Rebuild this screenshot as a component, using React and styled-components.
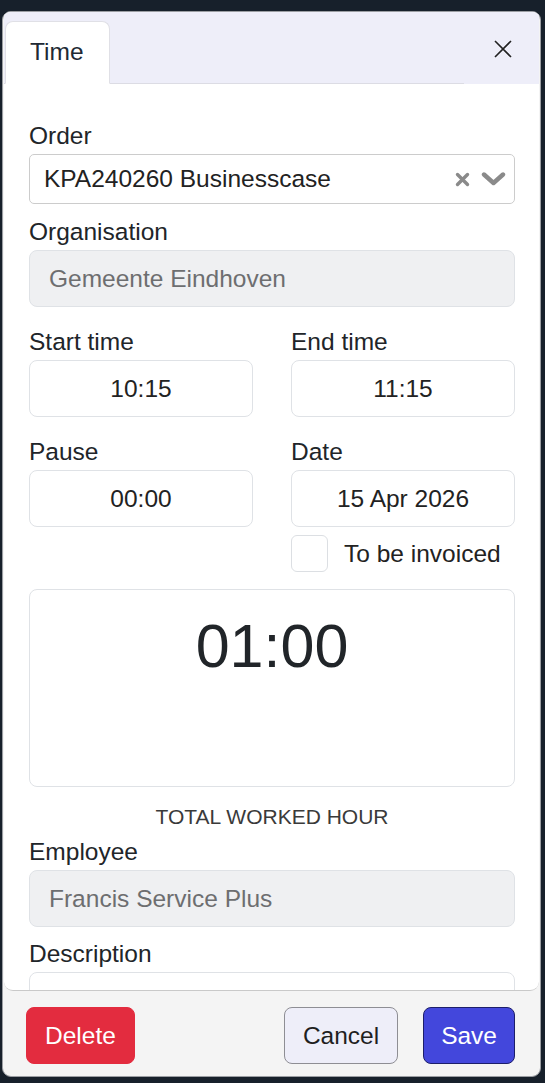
import React from "react";
import styled, { createGlobalStyle } from "styled-components";

const Global = createGlobalStyle`
  html, body { margin: 0; padding: 0; }
  body {
    background: #17202b;
    font-family: "Liberation Sans", Arial, Helvetica, sans-serif;
    color: #212529;
  }
  * { box-sizing: border-box; }
`;

const Page = styled.div`
  height: 1083px;
  padding: 11px 4px 6px 2px;
  display: flex;
`;

const Modal = styled.div`
  flex: 1;
  display: flex;
  flex-direction: column;
  background: #f4f4f4;
  border: 1px solid #9b9ea3;
  border-radius: 9px;
  overflow: hidden;
`;

const Panel = styled.div`
  flex: 1;
  display: flex;
  flex-direction: column;
  background: #fff;
  margin: 0 1px;
  border-bottom: 1px solid #c9c9c9;
  border-radius: 0 0 9px 9px;
  overflow: hidden;
`;

const Header = styled.div`
  display: flex;
  background: #eeeef9;
  height: 72px;
  padding-top: 9px;
`;

const TabList = styled.div`
  flex: 1;
  display: flex;
  align-items: flex-end;
  padding-left: 1px;
  border-bottom: 1px solid #dcdce4;
`;

const Tab = styled.div`
  height: 63px;
  margin-bottom: -1px;
  padding: 0 25px 2px 24px;
  display: flex;
  align-items: center;
  font-size: 24.5px;
  color: #212934;
  background: #fff;
  border: 1px solid #e0e0e6;
  border-bottom-color: #fff;
  border-radius: 8px 8px 0 0;
`;

const CloseButton = styled.button`
  width: 75px;
  border: 0;
  background: transparent;
  display: flex;
  align-items: flex-start;
  justify-content: center;
  padding: 18px 0 0 2px;
  color: #222;
`;

const Body = styled.div`
  flex: 1;
  padding: 34px 24px 0 25px;
  overflow: hidden;
`;

const Label = styled.div`
  font-size: 24.5px;
  line-height: 36px;
  color: #212529;
`;

const Group = styled.div`
  margin-bottom: ${(p) => p.$mb ?? 10}px;
`;

const SelectBox = styled.div`
  height: 50px;
  border: 1px solid #cccccc;
  border-radius: 5px;
  display: flex;
  align-items: center;
  padding: 0 8px 0 14px;
  font-size: 24.5px;
  color: #222;
`;

const SelectText = styled.span`
  flex: 1;
`;

const SelectIcons = styled.span`
  display: flex;
  align-items: center;
  gap: 11px;
  color: #8a8a8a;
`;

const Field = styled.div`
  height: 57px;
  border: 1px solid #dfe2e6;
  border-radius: 8px;
  display: flex;
  align-items: center;
  justify-content: ${(p) => (p.$center ? "center" : "flex-start")};
  padding: 0 19px;
  font-size: 24.5px;
  color: ${(p) => (p.$disabled ? "#6d6e70" : "#222")};
  background: ${(p) => (p.$disabled ? "#eff0f2" : "#fff")};
`;

const TwoCol = styled.div`
  display: grid;
  grid-template-columns: 1fr 1fr;
  column-gap: 38px;
  margin-bottom: ${(p) => p.$mb ?? 17}px;
`;

const CheckRow = styled.div`
  display: flex;
  align-items: center;
  gap: 16px;
  margin-top: 8px;
  font-size: 24.5px;
  color: #222;
`;

const CheckBox = styled.span`
  width: 37px;
  height: 37px;
  border: 1px solid #dcdfe3;
  border-radius: 6px;
  background: #fff;
`;

const TotalBox = styled.div`
  height: 198px;
  border: 1px solid #dfe2e6;
  border-radius: 8px;
  padding-top: 11px;
  text-align: center;
  font-size: 61px;
  line-height: 90px;
  color: #212529;
`;

const Caption = styled.div`
  margin-top: 15px;
  margin-bottom: 2px;
  text-align: center;
  font-size: 21px;
  line-height: 30px;
  color: #3a3a3a;
`;

const Footer = styled.div`
  height: 85px;
  display: flex;
  align-items: flex-start;
  padding: 16px 25px 0 23px;
  gap: 25px;
`;

const Button = styled.button`
  height: 57px;
  padding: 0 ${(p) => p.$px ?? 18}px;
  font-family: inherit;
  font-size: 24.5px;
  border-radius: 8px;
  border: 1px solid ${(p) => p.$border};
  background: ${(p) => p.$bg};
  color: ${(p) => p.$color};
  margin-right: ${(p) => (p.$push ? "auto" : "0")};
`;

function CloseIcon() {
  return (
    <svg width="20" height="20" viewBox="0 0 20 20">
      <path d="M2 2 L18 18 M18 2 L2 18" stroke="#222" strokeWidth="1.6" fill="none" />
    </svg>
  );
}

function ClearIcon() {
  return (
    <svg width="15" height="15" viewBox="0 0 15 15">
      <path d="M2.5 2.5 L12.5 12.5 M12.5 2.5 L2.5 12.5" stroke="currentColor" strokeWidth="3.4" strokeLinecap="round" fill="none" />
    </svg>
  );
}

function ChevronIcon() {
  return (
    <svg width="25" height="16" viewBox="0 0 25 16">
      <path d="M3 3.5 L12.5 12 L22 3.5" stroke="currentColor" strokeWidth="4.4" strokeLinecap="round" strokeLinejoin="round" fill="none" />
    </svg>
  );
}

export default function App() {
  return (
    <>
      <Global />
      <Page>
        <Modal>
          <Panel>
            <Header>
              <TabList>
                <Tab>Time</Tab>
              </TabList>
              <CloseButton aria-label="Close">
                <CloseIcon />
              </CloseButton>
            </Header>
            <Body>
              <Group>
                <Label>Order</Label>
                <SelectBox>
                  <SelectText>KPA240260 Businesscase</SelectText>
                  <SelectIcons>
                    <ClearIcon />
                    <ChevronIcon />
                  </SelectIcons>
                </SelectBox>
              </Group>
              <Group $mb={17}>
                <Label>Organisation</Label>
                <Field $disabled>Gemeente Eindhoven</Field>
              </Group>
              <TwoCol>
                <div>
                  <Label>Start time</Label>
                  <Field $center>10:15</Field>
                </div>
                <div>
                  <Label>End time</Label>
                  <Field $center>11:15</Field>
                </div>
              </TwoCol>
              <TwoCol>
                <div>
                  <Label>Pause</Label>
                  <Field $center>00:00</Field>
                </div>
                <div>
                  <Label>Date</Label>
                  <Field $center>15 Apr 2026</Field>
                  <CheckRow>
                    <CheckBox />
                    To be invoiced
                  </CheckRow>
                </div>
              </TwoCol>
              <TotalBox>01:00</TotalBox>
              <Caption>TOTAL WORKED HOUR</Caption>
              <Group $mb={9}>
                <Label>Employee</Label>
                <Field $disabled>Francis Service Plus</Field>
              </Group>
              <Group>
                <Label>Description</Label>
                <Field />
              </Group>
            </Body>
          </Panel>
          <Footer>
            <Button $push $px={18} $bg="#e32c3f" $border="#e32c3f" $color="#fff">Delete</Button>
            <Button $bg="#eeeef9" $border="#8e8e94" $color="#1f1f1f">Cancel</Button>
            <Button $px={17} $bg="#4347dc" $border="#1c1e6a" $color="#fff">Save</Button>
          </Footer>
        </Modal>
      </Page>
    </>
  );
}
